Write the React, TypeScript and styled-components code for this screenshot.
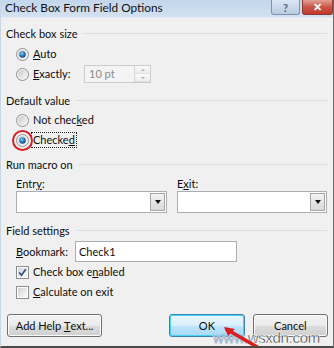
import React from "react";
import styled, { createGlobalStyle } from "styled-components";

const Global = createGlobalStyle`
  html, body { margin: 0; padding: 0; background: #f0f0f0; }
  body { font-family: Lato, "Noto Sans", sans-serif; }
`;

const Window = styled.div`
  position: relative;
  width: 334px;
  height: 348px;
  box-sizing: border-box;
  background: #f0f0f0;
  border-right: 1px solid #6d6d6d;
  border-bottom: 2px solid #4a4a4a;
  border-left: 1px solid #c9d6e3;
  display: flex;
  flex-direction: column;
  overflow: hidden;
  color: #0d0d0d;
  font-size: 11px;
`;

const TitleBar = styled.div`
  height: 17px;
  display: flex;
  align-items: flex-start;
  background: linear-gradient(#c3d6ec, #d3e1f1);
  border-bottom: 1px solid #e2eaf3;
`;

const Title = styled.div`
  flex: 1;
  font-size: 11.8px;
  line-height: 15px;
  padding-left: 4px;
  color: #111;
`;

const CaptionButton = styled.div<{ $close?: boolean }>`
  width: ${(p) => (p.$close ? 31 : 29)}px;
  height: 15px;
  margin-right: ${(p) => (p.$close ? 0 : 2)}px;
  box-sizing: border-box;
  border: 1px solid ${(p) => (p.$close ? "#8d3a32" : "#7f93ad")};
  border-top: none;
  border-radius: 0 0 3px 3px;
  background: ${(p) =>
    p.$close
      ? "linear-gradient(#e3a195, #c7574a 50%, #c0392b)"
      : "linear-gradient(#dbe6f3, #b9cce3)"};
  display: flex;
  align-items: center;
  justify-content: center;
  color: ${(p) => (p.$close ? "#fff" : "#4f6684")};
  font-size: 11px;
  font-weight: bold;
`;

const Body = styled.div`
  display: flex;
  flex-direction: column;
  padding: 0 5px 0 5px;
`;

const Heading = styled.div<{ $mt: number }>`
  display: flex;
  align-items: center;
  height: 20px;
  margin-top: ${(p) => p.$mt}px;
  gap: 6px;
  &::after {
    content: "";
    flex: 1;
    height: 1px;
    background: #d8dde3;
    margin-right: 1px;
  }
`;

const Row = styled.div<{ $indent?: number; $h?: number; $mt?: number }>`
  display: flex;
  align-items: center;
  height: ${(p) => p.$h ?? 20}px;
  margin-top: ${(p) => p.$mt ?? 0}px;
  padding-left: ${(p) => p.$indent ?? 10}px;
`;

const Label = styled.span<{ $focus?: boolean; $w?: number }>`
  margin-left: 3px;
  padding: 0 1px;
  line-height: 14px;
  width: ${(p) => (p.$w ? `${p.$w}px` : "auto")};
  outline: ${(p) => (p.$focus ? "1px dotted #222" : "none")};
  outline-offset: 0px;
`;

const FixedLabel = styled.span<{ $w: number }>`
  width: ${(p) => p.$w}px;
  line-height: 14px;
`;

const U = styled.span`
  text-decoration: underline;
  text-underline-offset: 1px;
`;

const RadioWrap = styled.span<{ $ring?: boolean }>`
  position: relative;
  display: inline-flex;
  width: 13px;
  height: 13px;
  &::after {
    content: "";
    display: ${(p) => (p.$ring ? "block" : "none")};
    position: absolute;
    left: -4px;
    top: -4px;
    width: 17px;
    height: 17px;
    border: 2px solid #d4202a;
    border-radius: 50%;
  }
`;

function Radio({ checked, ring }: { checked?: boolean; ring?: boolean }) {
  return (
    <RadioWrap $ring={ring}>
      <svg width="13" height="13" viewBox="0 0 13 13">
        <defs>
          <linearGradient id="rgr" x1="0" y1="0" x2="1" y2="1">
            <stop offset="0" stopColor="#c9c9c9" />
            <stop offset="1" stopColor="#f7f7f7" />
          </linearGradient>
          <radialGradient id="dot" cx="0.4" cy="0.35" r="0.7">
            <stop offset="0" stopColor="#8fd0f5" />
            <stop offset="0.5" stopColor="#2a7fc0" />
            <stop offset="1" stopColor="#0f3f72" />
          </radialGradient>
        </defs>
        <circle cx="6.5" cy="6.5" r="6" fill="#f4f4f4" stroke="#8d8d8d" strokeWidth="1" />
        <circle cx="6.5" cy="6.5" r="4.5" fill="url(#rgr)" />
        {checked && <circle cx="6.5" cy="6.5" r="3.2" fill="url(#dot)" />}
      </svg>
    </RadioWrap>
  );
}

function CheckBox({ checked }: { checked?: boolean }) {
  return (
    <svg width="13" height="13" viewBox="0 0 13 13">
      <defs>
        <linearGradient id="cbg" x1="0" y1="0" x2="1" y2="1">
          <stop offset="0" stopColor="#d2d2d2" />
          <stop offset="1" stopColor="#fafafa" />
        </linearGradient>
      </defs>
      <rect x="0.5" y="0.5" width="12" height="12" fill="#fff" stroke="#8e8f8f" />
      <rect x="2" y="2" width="9" height="9" fill="url(#cbg)" />
      {checked && (
        <path d="M3.2 6.6 L5.4 9.2 L9.8 3.2" fill="none" stroke="#2b4b7a" strokeWidth="1.6" />
      )}
    </svg>
  );
}

const SpinBox = styled.div`
  width: 67px;
  height: 18px;
  box-sizing: border-box;
  border: 1px solid #c9cdd3;
  background: #f4f4f4;
  display: flex;
  align-items: center;
`;

const SpinText = styled.span`
  flex: 1;
  color: #8a8a8a;
  padding-left: 4px;
  line-height: 14px;
`;

const SpinButtons = styled.div`
  width: 15px;
  height: 100%;
  display: flex;
  flex-direction: column;
  border-left: 1px solid #d6d6d6;
`;

const SpinHalf = styled.div`
  flex: 1;
  display: flex;
  align-items: center;
  justify-content: center;
  background: linear-gradient(#fafafa, #ececec);
  border-bottom: 1px solid #e0e0e0;
  &::before {
    content: "";
    border-left: 2.5px solid transparent;
    border-right: 2.5px solid transparent;
    border-bottom: 2.5px solid #b0b0b0;
  }
  & + &::before {
    border-bottom: none;
    border-top: 2.5px solid #b0b0b0;
  }
`;

const MacroGrid = styled.div`
  display: grid;
  grid-template-columns: 151px 150px;
  column-gap: 10px;
  padding-left: 10px;
  margin-top: 3px;
`;

const FieldLabel = styled.div`
  line-height: 14px;
  height: 14px;
`;

const Combo = styled.div`
  height: 22px;
  box-sizing: border-box;
  border: 1px solid #abadb3;
  background: #fff;
  display: flex;
  justify-content: flex-end;
  padding: 1px;
`;

const ComboArrow = styled.div`
  width: 15px;
  box-sizing: border-box;
  border: 1px solid #a6a6a6;
  background: linear-gradient(#f3f3f3, #d9d9d9);
  display: flex;
  align-items: center;
  justify-content: center;
  &::before {
    content: "";
    border-left: 3.5px solid transparent;
    border-right: 3.5px solid transparent;
    border-top: 4px solid #111;
  }
`;

const TextBox = styled.div`
  width: 162px;
  height: 21px;
  box-sizing: border-box;
  border: 1px solid #abadb3;
  background: #fff;
  display: flex;
  align-items: center;
  padding-left: 3px;
`;

const ButtonRow = styled.div`
  display: flex;
  align-items: center;
  margin-top: 12px;
  padding-left: 1px;
`;

const Button = styled.div<{ $w: number; $default?: boolean; $ml?: number }>`
  width: ${(p) => p.$w}px;
  height: 23px;
  margin-left: ${(p) => p.$ml ?? 0}px;
  box-sizing: border-box;
  border: 1px solid ${(p) => (p.$default ? "#3c7fb1" : "#707070")};
  border-radius: 3px;
  background: ${(p) =>
    p.$default
      ? "linear-gradient(#eaf6fd, #d9f0fc 50%, #bee6fd 51%, #a7d9f5)"
      : "linear-gradient(#f2f2f2, #ebebeb 50%, #dddddd 51%, #cfcfcf)"};
  box-shadow: inset 0 0 0 1px ${(p) => (p.$default ? "#48d4f8" : "#fcfcfc")};
  display: flex;
  align-items: center;
  justify-content: center;
  line-height: 14px;
  white-space: pre;
`;

const Watermark = styled.div`
  position: absolute;
  left: 212px;
  top: 330px;
  font-family: "Liberation Sans", Arial, sans-serif;
  font-size: 15px;
  line-height: 16px;
  letter-spacing: -0.3px;
  color: #222;
  -webkit-text-stroke: 0.4px #fff;
  text-shadow: 0 0 1px #fff, 0 0 1px #fff;
`;

const WWW = styled.span`
  color: rgba(230, 240, 250, 0.6);
  -webkit-text-stroke: 0.8px #9fb3c8;
`;

const Arrow = styled.svg`
  position: absolute;
  left: 222px;
  top: 326px;
`;

export default function App() {
  return (
    <>
      <Global />
      <Window>
        <TitleBar>
          <Title>Check Box Form Field Options</Title>
          <CaptionButton>?</CaptionButton>
          <CaptionButton $close>✕</CaptionButton>
        </TitleBar>
        <Body>
          <Heading $mt={5}>Check box size</Heading>
          <Row $mt={1}>
            <Radio checked />
            <Label>
              <U>A</U>uto
            </Label>
          </Row>
          <Row>
            <Radio />
            <Label $w={50}>
              <U>E</U>xactly:
            </Label>
            <SpinBox>
              <SpinText>10 pt</SpinText>
              <SpinButtons>
                <SpinHalf />
                <SpinHalf />
              </SpinButtons>
            </SpinBox>
          </Row>
          <Heading $mt={6}>Default value</Heading>
          <Row>
            <Radio />
            <Label>
              Not chec<U>k</U>ed
            </Label>
          </Row>
          <Row>
            <Radio checked ring />
            <Label $focus>
              Checke<U>d</U>
            </Label>
          </Row>
          <Heading $mt={4}>Run macro on</Heading>
          <MacroGrid>
            <FieldLabel>
              Entr<U>y</U>:
            </FieldLabel>
            <FieldLabel>
              E<U>x</U>it:
            </FieldLabel>
            <Combo>
              <ComboArrow />
            </Combo>
            <Combo>
              <ComboArrow />
            </Combo>
          </MacroGrid>
          <Heading $mt={7}>Field settings</Heading>
          <Row $h={21} $mt={1}>
            <FixedLabel $w={59}>
              <U>B</U>ookmark:
            </FixedLabel>
            <TextBox>Check1</TextBox>
          </Row>
          <Row>
            <CheckBox checked />
            <Label>
              Check box e<U>n</U>abled
            </Label>
          </Row>
          <Row>
            <CheckBox />
            <Label>
              <U>C</U>alculate on exit
            </Label>
          </Row>
          <ButtonRow>
            <Button $w={96}>
              {"Add Help "}
              <U>T</U>
              {"ext..."}
            </Button>
            <Button $w={76} $default $ml={67}>
              OK
            </Button>
            <Button $w={76} $ml={8}>
              Cancel
            </Button>
          </ButtonRow>
        </Body>
        <Watermark>
          <WWW>www.</WWW>wsxdn.com
        </Watermark>
        <Arrow width="40" height="24" viewBox="0 0 40 24">
          <path d="M3 3 L36 22" stroke="#d81e1e" strokeWidth="3.5" />
          <path d="M1 1 L12 3 L5 10 Z" fill="#d81e1e" />
        </Arrow>
      </Window>
    </>
  );
}
